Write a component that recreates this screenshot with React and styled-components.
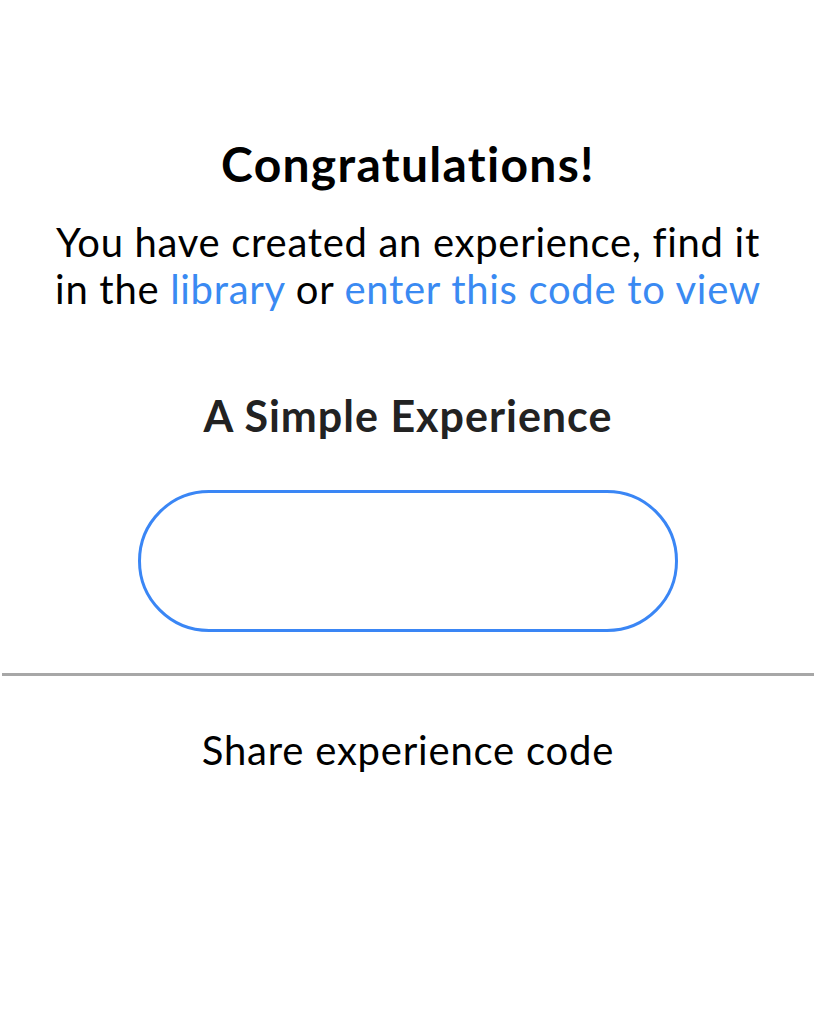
import React from "react";
import styled, { createGlobalStyle } from "styled-components";

const Global = createGlobalStyle`
  html, body { margin: 0; padding: 0; background: #fff; }
  body { font-family: Lato, "Noto Sans", sans-serif; }
`;

const Page = styled.div`
  width: 816px;
  min-height: 1032px;
  display: flex;
  flex-direction: column;
  align-items: stretch;
  padding-top: 134px;
  box-sizing: border-box;
`;

const Top = styled.section`
  display: flex;
  flex-direction: column;
  align-items: center;
  padding: 0 20px;
`;

const Title = styled.h1`
  margin: 0;
  font-size: 48px;
  font-weight: 700;
  color: #000;
  line-height: 60px;
  letter-spacing: 1.3px;
`;

const Message = styled.p`
  margin: 25px 0 0;
  font-size: 40px;
  line-height: 47px;
  color: #000;
  text-align: center;
  letter-spacing: 0.7px;
  white-space: nowrap;
`;

const Link = styled.a`
  color: #3a8af2;
  text-decoration: none;
`;

const ExperienceName = styled.h2`
  margin: 76px 0 0;
  font-size: 43px;
  font-weight: 700;
  color: #222;
  line-height: 54px;
  letter-spacing: 1px;
`;

const CodeField = styled.div`
  margin-top: 47px;
  width: 540px;
  height: 142px;
  box-sizing: border-box;
  border: 3px solid #3a86f5;
  border-radius: 71px;
`;

const Divider = styled.hr`
  margin: 41px 2px 0;
  border: none;
  height: 3px;
  background: #a7a7a7;
`;

const Share = styled.div`
  margin-top: 47px;
  text-align: center;
  font-size: 40px;
  line-height: 54px;
  color: #000;
  letter-spacing: 0.8px;
`;

export default function App() {
  return (
    <>
      <Global />
      <Page>
        <Top>
          <Title>Congratulations!</Title>
          <Message>
            You have created an experience, find it
            <br />
            in the <Link>library</Link> or <Link>enter this code to view</Link>
          </Message>
          <ExperienceName>A Simple Experience</ExperienceName>
          <CodeField />
        </Top>
        <Divider />
        <Share>Share experience code</Share>
      </Page>
    </>
  );
}
